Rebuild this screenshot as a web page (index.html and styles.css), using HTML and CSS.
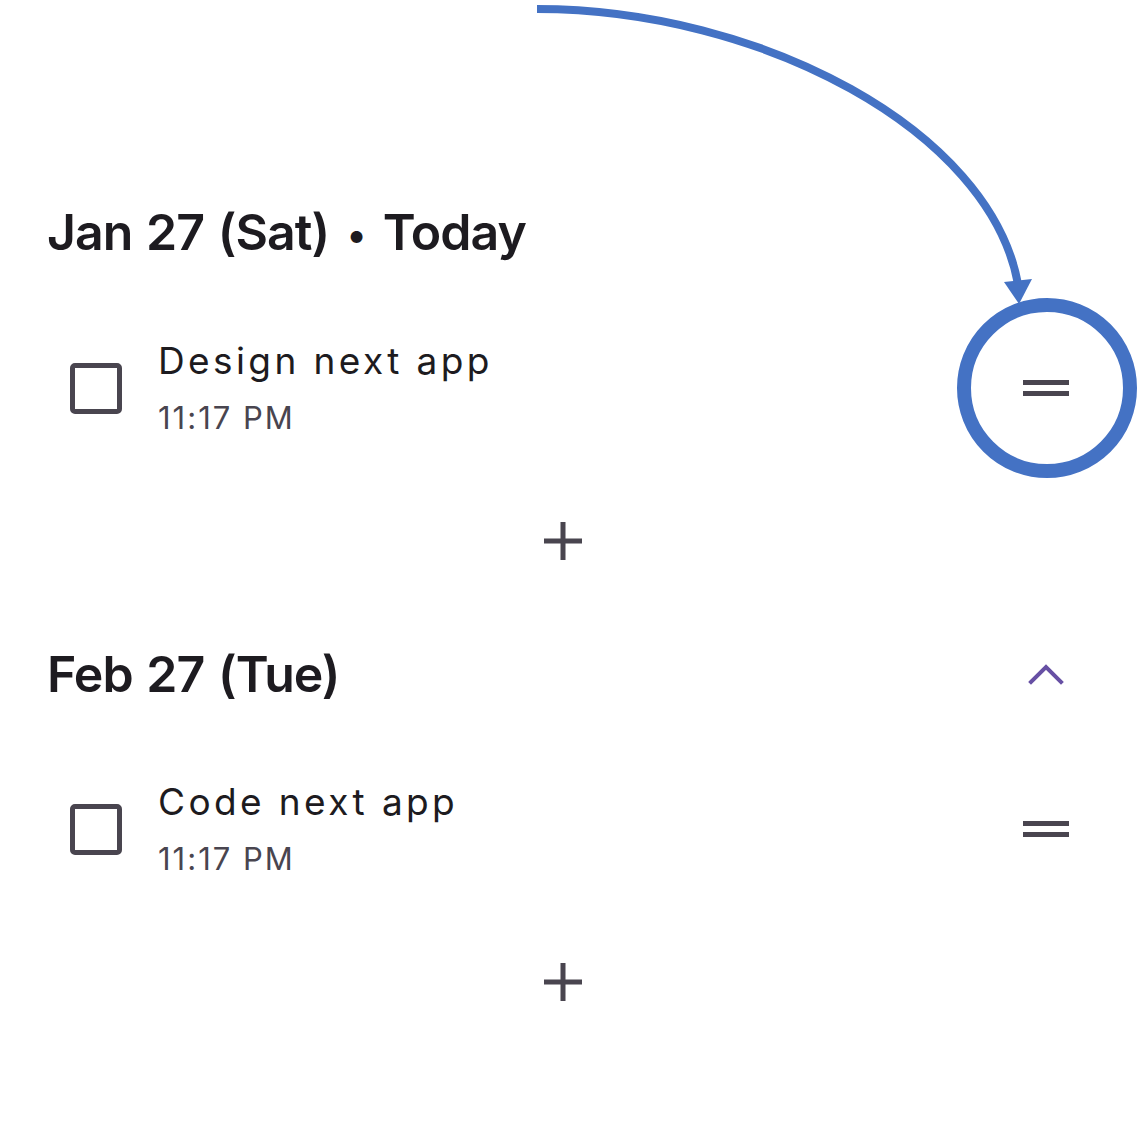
FILE: index.html
```html
<!DOCTYPE html>
<html lang="en">
<head>
<meta charset="utf-8">
<title>Tasks</title>
<link rel="stylesheet" href="styles.css">
</head>
<body>
<main class="list">
  <section class="day">
    <header class="day-header">
      <h2 class="day-title">Jan 27 (Sat) <span class="dot">•</span> Today</h2>
    </header>
    <div class="task">
      <span class="checkbox"></span>
      <div class="task-text">
        <div class="task-title">Design next app</div>
        <div class="task-time">11:17 PM</div>
      </div>
      <span class="handle">
        <svg width="46" height="16" viewBox="0 0 46 16"><rect x="0" y="0" width="46" height="5" fill="#49454f"/><rect x="0" y="11" width="46" height="5" fill="#49454f"/></svg>
      </span>
    </div>
    <div class="add">
      <svg width="40" height="40" viewBox="0 0 40 40"><path d="M20 1V39M1 20H39" stroke="#49454f" stroke-width="5" fill="none"/></svg>
    </div>
  </section>

  <section class="day">
    <header class="day-header">
      <h2 class="day-title">Feb 27 (Tue)</h2>
      <span class="chevron">
        <svg width="46" height="30" viewBox="0 0 46 30"><path d="M8 23L23 8L38 23" stroke="#6750a4" stroke-width="4" fill="none" stroke-linecap="square"/></svg>
      </span>
    </header>
    <div class="task">
      <span class="checkbox"></span>
      <div class="task-text">
        <div class="task-title">Code next app</div>
        <div class="task-time">11:17 PM</div>
      </div>
      <span class="handle">
        <svg width="46" height="16" viewBox="0 0 46 16"><rect x="0" y="0" width="46" height="5" fill="#49454f"/><rect x="0" y="11" width="46" height="5" fill="#49454f"/></svg>
      </span>
    </div>
    <div class="add">
      <svg width="40" height="40" viewBox="0 0 40 40"><path d="M20 1V39M1 20H39" stroke="#49454f" stroke-width="5" fill="none"/></svg>
    </div>
  </section>
</main>

<svg class="annotation" width="1145" height="1127" viewBox="0 0 1145 1127">
  <path d="M537 9C760 9 990 130 1018 284" stroke="#4472c4" stroke-width="8" fill="none"/>
  <path d="M1004 282L1032 279L1019 304Z" fill="#4472c4"/>
  <circle cx="1047" cy="388" r="83" stroke="#4472c4" stroke-width="14" fill="none"/>
</svg>
</body>
</html>
```

FILE: styles.css
```css
html, body {
  margin: 0;
  padding: 0;
  background: #ffffff;
}

body {
  position: relative;
  width: 1145px;
  height: 1127px;
  overflow: hidden;
  font-family: Inter, "Noto Sans", "Liberation Sans", sans-serif;
  color: #1d1b20;
}

.list {
  padding: 193px 76px 0 47px;
}

.day + .day {
  margin-top: 55px;
}

.day-header {
  height: 80px;
  display: flex;
  align-items: center;
  justify-content: space-between;
}

.day-title {
  margin: 0;
  font-size: 50px;
  font-weight: 600;
  line-height: 80px;
  letter-spacing: -0.95px;
  word-spacing: 2px;
  color: #1d1b20;
}

.dot {
  display: inline-block;
  font-size: 38px;
  margin: 0 4px;
  vertical-align: 2px;
}

.chevron {
  display: flex;
  width: 46px;
  justify-content: center;
}

.chevron svg {
  display: block;
}

.task {
  height: 230px;
  display: flex;
  align-items: center;
  padding-left: 23px;
  gap: 36px;
}

.checkbox {
  flex: none;
  width: 42px;
  height: 41px;
  border: 5px solid #49454f;
  border-radius: 5px;
}

.task-text {
  flex: 1;
  display: flex;
  flex-direction: column;
}

.task-title {
  font-size: 37px;
  line-height: 40px;
  letter-spacing: 3.4px;
  color: #1d1b20;
}

.task-time {
  margin-top: 19px;
  font-size: 31px;
  line-height: 36px;
  letter-spacing: 2px;
  color: #49454f;
}

.handle {
  flex: none;
  width: 46px;
  display: flex;
  justify-content: center;
}

.handle svg {
  display: block;
}

.add {
  height: 76px;
  display: flex;
  align-items: center;
  justify-content: center;
  padding-left: 10px;
}

.add svg {
  display: block;
}

.annotation {
  position: absolute;
  left: 0;
  top: 0;
  pointer-events: none;
}
```
